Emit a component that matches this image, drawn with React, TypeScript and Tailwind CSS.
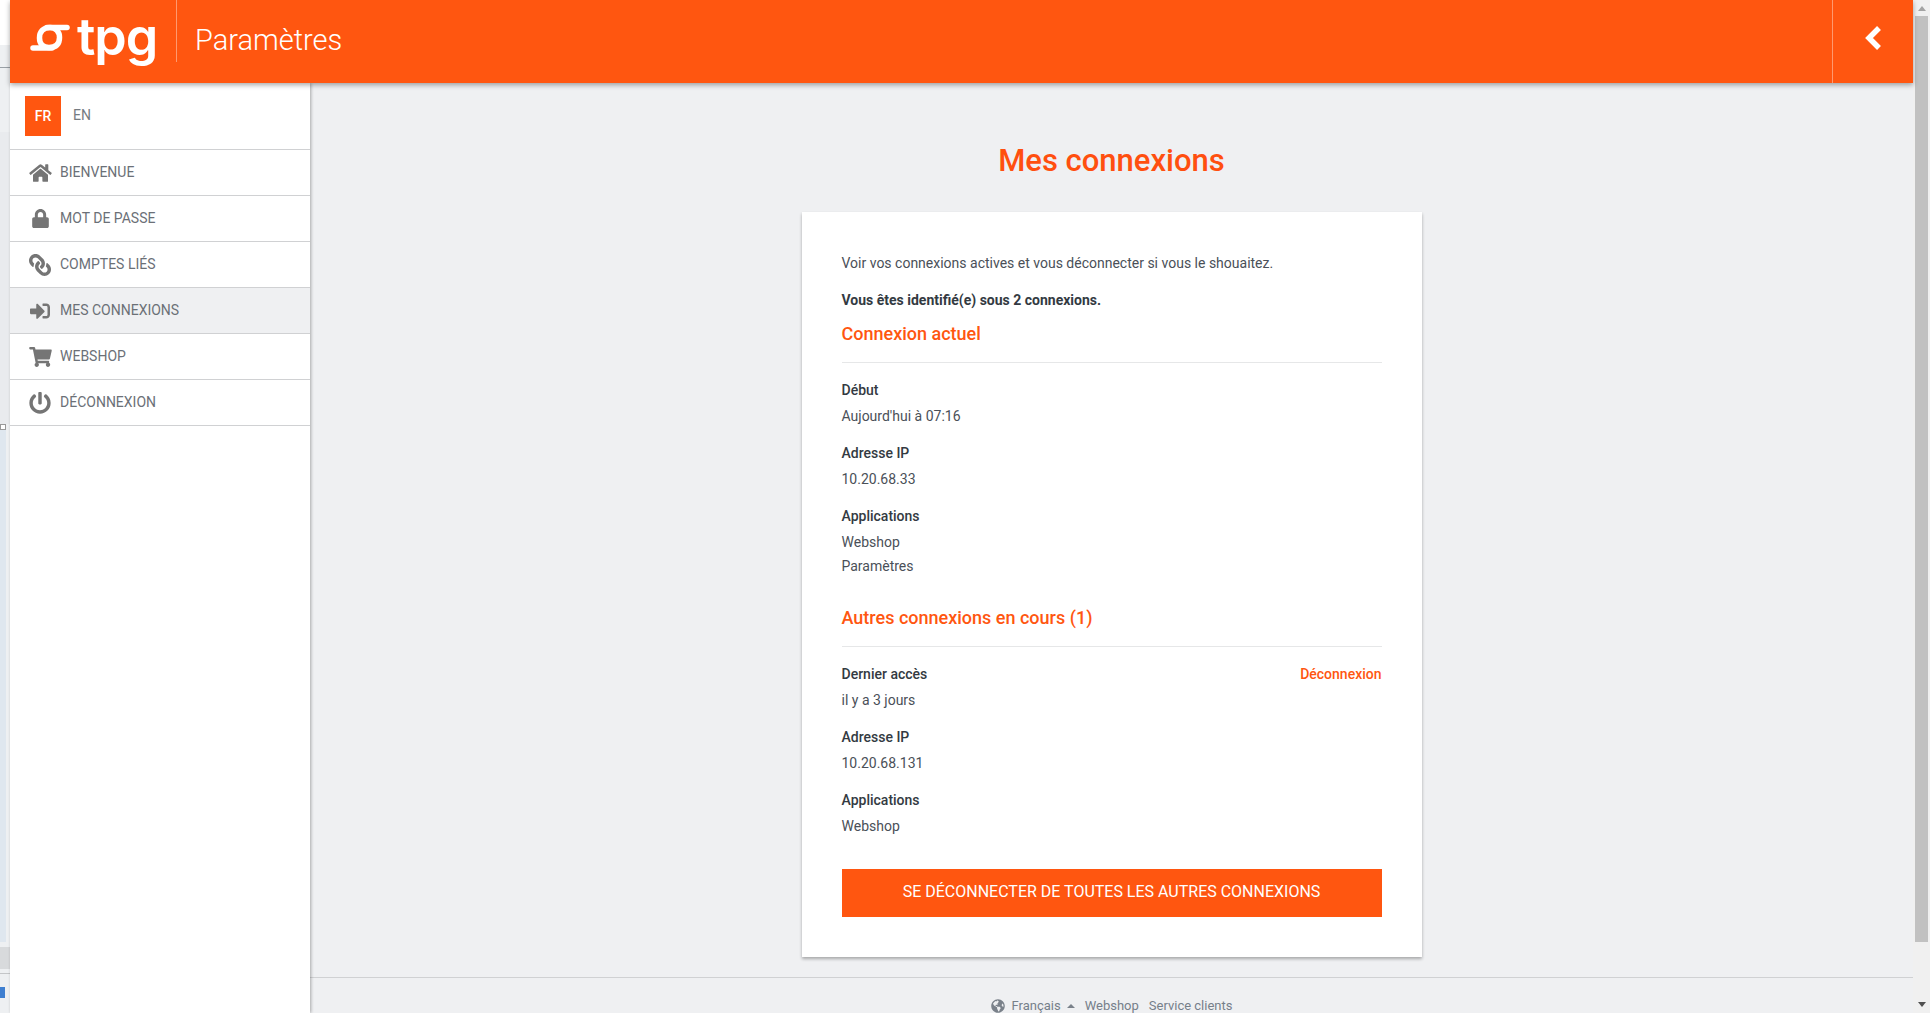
import { FaGlobeAmericas, FaHome, FaLink, FaLock, FaPowerOff, FaShoppingCart, FaSignInAlt } from 'react-icons/fa';
import type { ReactNode } from 'react';

const menu = [
  { label: 'Bienvenue', icon: <FaHome className="w-[23px] h-[20px]" /> },
  { label: 'Mot de passe', icon: <FaLock className="w-[17px] h-[19px]" /> },
  { label: 'Comptes liés', icon: <FaLink className="w-[22px] h-[22px] -scale-x-100" /> },
  { label: 'Mes connexions', icon: <FaSignInAlt className="w-[22px] h-[20px]" />, active: true },
  { label: 'Webshop', icon: <FaShoppingCart className="w-[23px] h-[20px]" /> },
  { label: 'Déconnexion', icon: <FaPowerOff className="w-[22px] h-[22px]" /> },
];

const Field = ({ label, children, className = '' }: { label: string; children: ReactNode; className?: string }) => (
  <div className={className}>
    <div className="font-medium leading-[24px] text-[#333a42]">{label}</div>
    <div className="mt-[2px] leading-[24px] text-[#4a5058]">{children}</div>
  </div>
);

const App = () => {
  return (
    <div className="flex h-[1013px] w-[1930px] overflow-hidden bg-[#eff0f2] font-['Roboto',sans-serif] text-[14px]">
      {/* bit of the window behind the page */}
      <div className="flex w-[10px] shrink-0 flex-col bg-[#eef0f2]">
        <div className="h-[45px] bg-white" />
        <div className="h-[22px]" />
        <div className="h-[1px] bg-[#9aa0a6]" />
        <div className="h-[64px]" />
        <div className="h-[292px] bg-[#e9ebee]" />
        <div className="h-[6px] w-[6px] border border-[#999] bg-white" />
        <div className="h-[512px] w-[6px] bg-[#dfe7ef]" />
        <div className="h-[5px]" />
        <div className="h-[22px] bg-[#d8dadc]" />
        <div className="h-[4px]" />
        <div className="h-[1px] bg-[#c4c6c8]" />
        <div className="h-[13px]" />
        <div className="h-[11px] w-[5px] bg-[#3f7fd0]" />
      </div>

      <div className="flex min-w-0 flex-1 flex-col">
        <header className="relative z-20 flex h-[83px] shrink-0 items-stretch bg-[#ff5610] text-white shadow-[0_2px_5px_rgba(0,0,0,0.35)]">
          <div className="flex w-[166px] items-start">
            <svg viewBox="0 0 40 27" className="ml-[20px] mt-[24px] h-[27px] w-[40px]" fill="none" stroke="white" strokeWidth="5.5" strokeLinecap="round">
              <path d="M20 3.500C13 3.500 9.500 8 9.500 14C9.500 20 13 23.500 19 23.500C26 23.500 29.500 20 29.500 13.500C29.500 8 26 3.500 20 3.500Z" />
              <path d="M17 3.500H37" />
              <path d="M3 24H22" />
            </svg>
            <span className="ml-[7px] mt-[6px] font-['Inter',sans-serif] text-[52px] font-semibold leading-[62px] tracking-[-1px]">tpg</span>
          </div>
          <div className="mb-[21px] w-px bg-white/40" />
          <h1 className="ml-[18px] text-[29px] font-light leading-[80px]">Paramètres</h1>
          <button className="ml-auto flex w-[81px] items-center justify-center border-l border-white/40">
            <svg viewBox="0 0 18 26" className="mb-[7px] h-[26px] w-[18px]" fill="none" stroke="white" strokeWidth="5.500">
              <path d="M15 3L5 13L15 23" />
            </svg>
          </button>
        </header>

        <div className="flex min-h-0 flex-1">
          <nav className="relative z-10 w-[300px] shrink-0 bg-white shadow-[1px_0_3px_rgba(0,0,0,0.3)]">
            <div className="flex h-[67px] items-start border-b border-[#d0d1d3] pl-[15px] pt-[13px]">
              <span className="flex h-[40px] w-[36px] items-center justify-center bg-[#ff5610] font-medium text-white">FR</span>
              <span className="ml-[12px] leading-[38px] text-[#757b82]">EN</span>
            </div>
            {menu.map(item => (
              <a
                key={item.label}
                className={`flex h-[46px] items-center border-b border-[#d0d1d3] uppercase text-[#6b7077] ${item.active ? 'bg-[#eff0f2]' : ''}`}
              >
                <span className="flex w-[50px] justify-center pl-[10px] text-[#757575]">{item.icon}</span>
                <span>{item.label}</span>
              </a>
            ))}
          </nav>

          <main className="flex min-w-0 flex-1 flex-col items-center">
            <h2 className="mt-[58px] text-[31px] font-medium leading-[40px] text-[#ff4f0f]">Mes connexions</h2>
            <section className="mt-[31px] h-[745px] w-[620px] shrink-0 bg-white px-[40px] pt-[39px] shadow-[0_2px_3px_rgba(0,0,0,0.3)]">
              <p className="leading-[24px] text-[#4a5058]">Voir vos connexions actives et vous déconnecter si vous le shouaitez.</p>
              <p className="mt-[13px] font-bold leading-[24px] text-[#333a42]">Vous êtes identifié(e) sous 2 connexions.</p>
              <h3 className="mt-[10px] text-[18px] font-medium leading-[24px] text-[#ff5610]">Connexion actuel</h3>
              <hr className="mt-[16px] border-[#e6e7e8]" />
              <Field label="Début" className="mt-[15px]">Aujourd'hui à 07:16</Field>
              <Field label="Adresse IP" className="mt-[13px]">10.20.68.33</Field>
              <Field label="Applications" className="mt-[13px]">
                Webshop
                <br />
                Paramètres
              </Field>
              <h3 className="mt-[28px] text-[18px] font-medium leading-[24px] text-[#ff5610]">Autres connexions en cours (1)</h3>
              <hr className="mt-[16px] border-[#e6e7e8]" />
              <div className="relative">
                <a className="absolute right-0 top-[15px] font-medium leading-[24px] text-[#ff5610]">Déconnexion</a>
                <Field label="Dernier accès" className="pt-[15px]">il y a 3 jours</Field>
              </div>
              <Field label="Adresse IP" className="mt-[13px]">10.20.68.131</Field>
              <Field label="Applications" className="mt-[13px]">Webshop</Field>
              <button className="mt-[31px] h-[48px] w-full bg-[#ff5610] pb-[3px] text-[16px] uppercase text-white">
                Se déconnecter de toutes les autres connexions
              </button>
            </section>
            <footer className="mt-[20px] w-full shrink-0 border-t border-[#d0d1d3] pt-[21px]">
              <div className="flex items-center justify-center text-[13px] leading-[14px] text-[#767f8a]">
                <FaGlobeAmericas className="mr-[7px] h-[14px] w-[14px] text-[#7a818a]" />
                <span>Français</span>
                <span className="ml-[6px] mr-[10px] h-0 w-0 border-x-[4px] border-b-[4px] border-x-transparent border-b-[#7a818a]" />
                <span className="mr-[10px]">Webshop</span>
                <span>Service clients</span>
              </div>
            </footer>
          </main>
        </div>
      </div>

      {/* browser scrollbar */}
      <div className="flex w-[17px] shrink-0 flex-col items-center bg-[#f0f0f0]">
        <div className="mt-[6px] h-0 w-0 border-x-[4px] border-b-[5px] border-x-transparent border-b-[#a3a3a3]" />
        <div className="mt-[5px] h-[926px] w-[13px] bg-[#c1c1c1]" />
        <div className="mt-[60px] h-0 w-0 border-x-[4px] border-t-[5px] border-x-transparent border-t-[#505050]" />
      </div>
    </div>
  );
};

export default App;
